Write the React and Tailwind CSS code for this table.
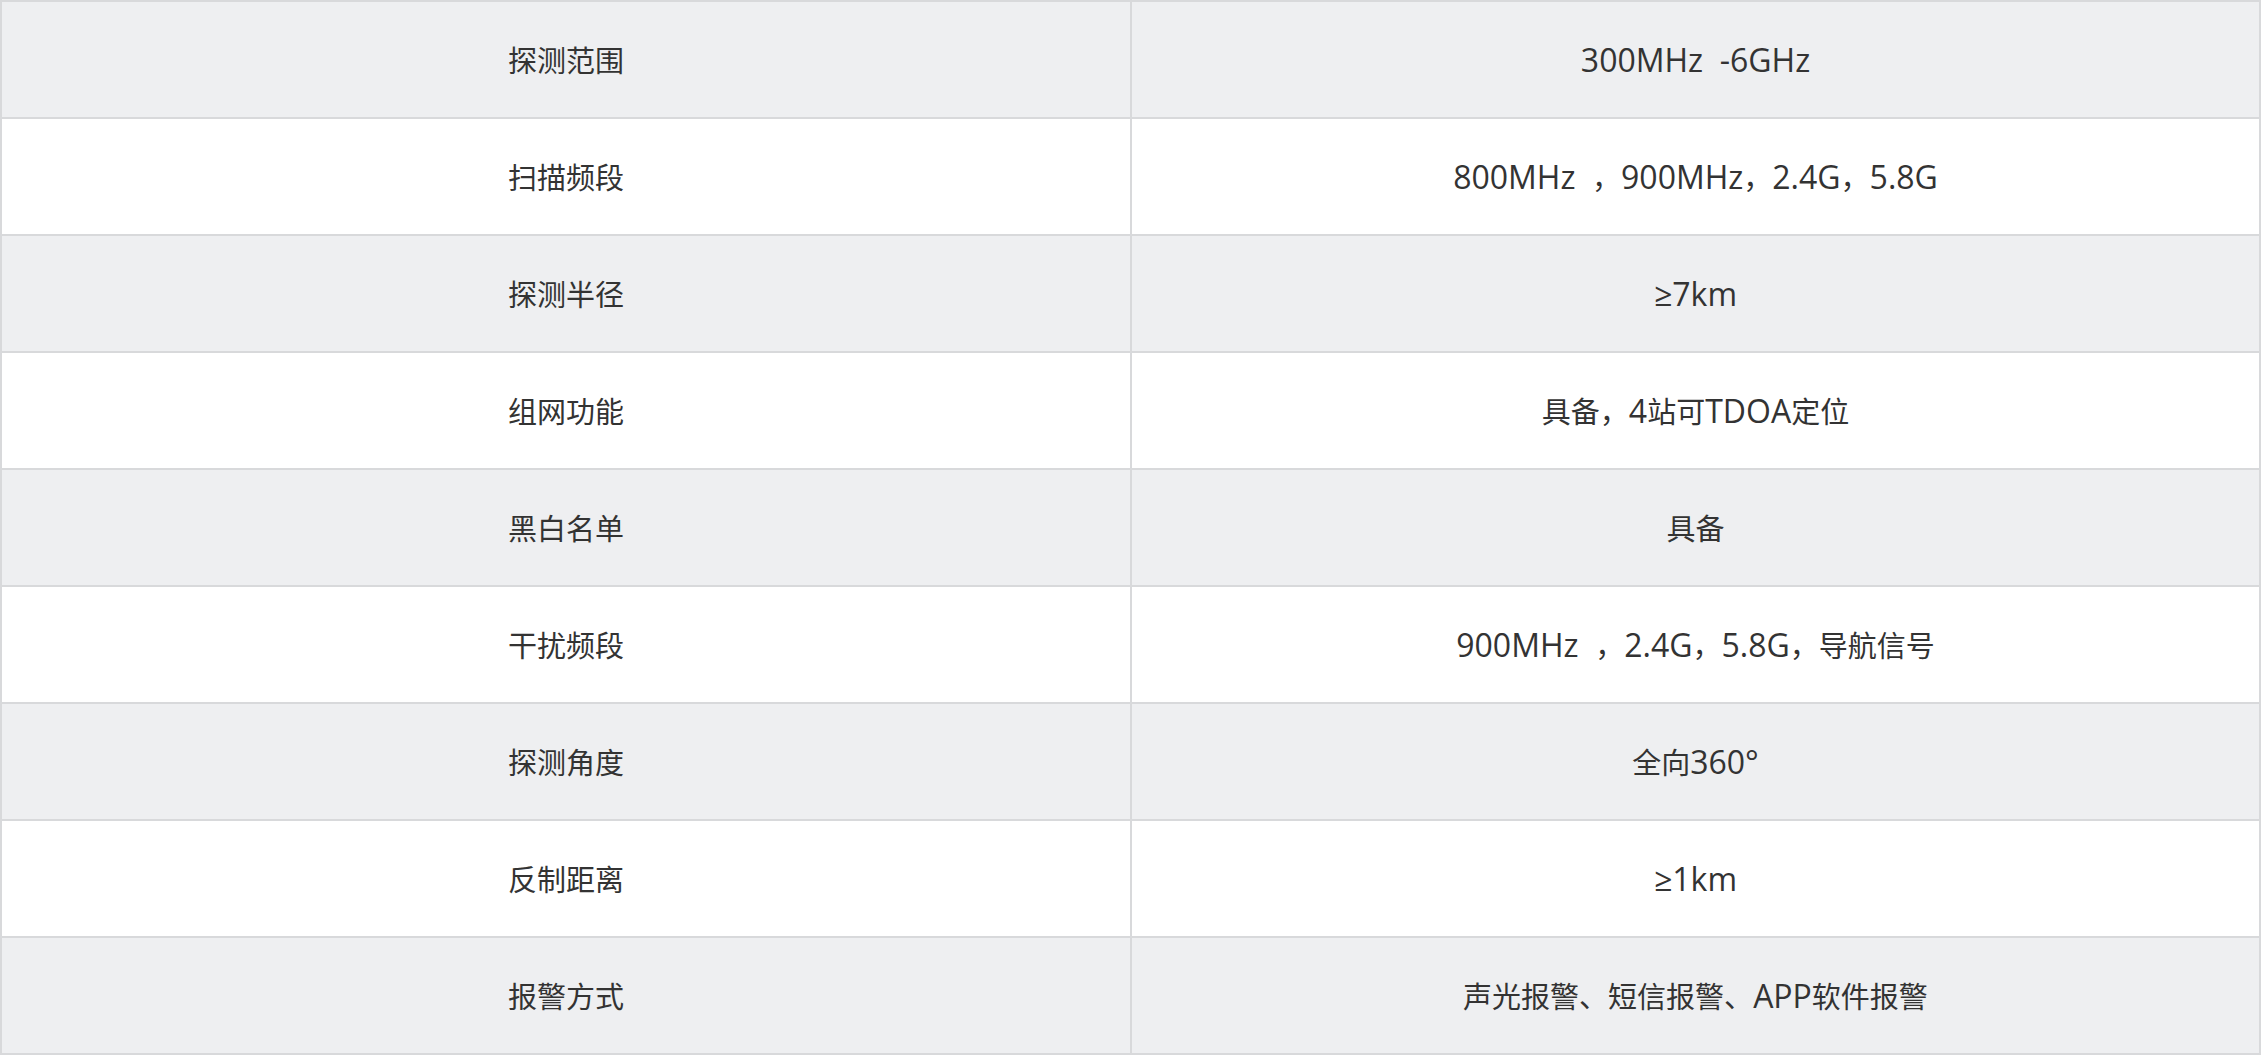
import React from 'react';

const specs = [
  ['探测范围', '300MHz\u00a0\u00a0-6GHz'],
  ['扫描频段', '800MHz\u00a0\u00a0，900MHz，2.4G，5.8G'],
  ['探测半径', '≥7km'],
  ['组网功能', '具备，4站可TDOA定位'],
  ['黑白名单', '具备'],
  ['干扰频段', '900MHz\u00a0\u00a0，2.4G，5.8G，导航信号'],
  ['探测角度', '全向360°'],
  ['反制距离', '≥1km'],
  ['报警方式', '声光报警、短信报警、APP软件报警'],
];

// Latin runs render a bit larger than the CJK ones in the original font
const MixedText = ({ text }) => {
  const parts = text.split(/([\u3000-\u9fff\uff00-\uffef]+)/);
  return (
    <span>
      {parts.map((part, i) =>
        i % 2 === 1 ? (
          <span key={i}>{part}</span>
        ) : (
          <span key={i} className="text-[32px]">{part}</span>
        )
      )}
    </span>
  );
};

const App = () => {
  return (
    <div
      className="w-[2261px] bg-white text-[29px] leading-none text-[#333333]"
      style={{ fontFamily: '"Open Sans", "Noto Sans CJK SC", sans-serif' }}
    >
      <div className="border-l-2 border-t-2 border-[#d8d9db]">
        {specs.map(([label, value], index) => (
          <div
            key={index}
            className={`grid grid-cols-[1130px_1129px] h-[117px] ${index % 2 === 0 ? 'bg-[#eeeff1]' : 'bg-white'}`}
          >
            <div className="flex items-center justify-center border-r-2 border-b-2 border-[#d8d9db]">
              <MixedText text={label} />
            </div>
            <div className="flex items-center justify-center border-r-2 border-b-2 border-[#d8d9db]">
              <MixedText text={value} />
            </div>
          </div>
        ))}
      </div>
    </div>
  );
};

export default App;
